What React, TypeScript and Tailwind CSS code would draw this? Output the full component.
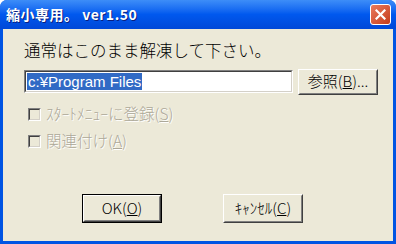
const jp = { fontFamily: '"Noto Sans CJK JP", sans-serif' };

function Check({ label, mn }: { label: string; mn: string }) {
  return (
    <div className="flex items-center h-[17px]">
      <div className="w-[13px] h-[13px] border border-t-[#808080] border-l-[#808080] border-b-white border-r-white">
        <div className="w-full h-full border border-t-[#404040] border-l-[#404040] border-b-[#D4D0C8] border-r-[#D4D0C8] bg-[#ECE9D8]"></div>
      </div>
      <span className="ml-[5px] text-[15.5px] font-light leading-none text-[#ACA899] [text-shadow:1px_1px_0_#fff]">
        {label}(<span className="underline">{mn}</span>)
      </span>
    </div>
  );
}

function Btn({ children, def, className }: { children: React.ReactNode; def?: boolean; className?: string }) {
  return (
    <div className={`${def ? "border border-black" : ""} ${className ?? ""}`}>
      <div className="h-full border border-t-white border-l-white border-b-[#404040] border-r-[#404040]">
        <div className="h-full flex items-center justify-center border border-t-[#ECE9D8] border-l-[#ECE9D8] border-b-[#808080] border-r-[#808080] text-[15px] font-light text-black">
          {children}
        </div>
      </div>
    </div>
  );
}

export default function App() {
  return (
    <div className="w-[396px] h-[244px] flex flex-col bg-[#0054E3] rounded-t-[7px] overflow-hidden" style={jp}>
      <div className="h-[29px] flex items-center justify-between pl-[6px] pr-[5px] bg-gradient-to-b from-[#3D8DF8] via-[#0058EE] to-[#0048D8]">
        <span className="text-white font-bold text-[14px] tracking-[0.5px] [text-shadow:1px_1px_0_#0A1F80]">縮小専用。 ver1.50</span>
        <div className="w-[21px] h-[21px] rounded-[3px] border border-white bg-gradient-to-br from-[#E97A5C] to-[#C53A18] flex items-center justify-center">
          <svg width="11" height="11" viewBox="0 0 11 11">
            <path d="M1.5 1.5 L9.5 9.5 M9.5 1.5 L1.5 9.5" stroke="white" strokeWidth="2.2" strokeLinecap="square" />
          </svg>
        </div>
      </div>
      <div className="flex-1 mx-[3px] mb-[3px] bg-[#ECE9D8] flex flex-col pl-[21px] pt-[13px]">
        <div className="text-[16.5px] font-light leading-none text-black">通常はこのまま解凍して下さい。</div>
        <div className="flex items-center mt-[10px] gap-[5px]">
          <div className="w-[269px] h-[23px] border border-t-[#808080] border-l-[#808080] border-b-white border-r-white">
            <div className="h-full border border-t-[#404040] border-l-[#404040] border-b-[#D4D0C8] border-r-[#D4D0C8] bg-white flex items-center pl-[1px]">
              <span className="bg-[#316AC5] text-white text-[15px] leading-[17px] px-[1px] font-['Liberation_Sans',sans-serif]">c:¥Program Files</span>
            </div>
          </div>
          <Btn className="w-[80px] h-[26px]">参照(<span className="underline">B</span>)...</Btn>
        </div>
        <div className="flex flex-col gap-[10px] mt-[11px] pl-[4px]">
          <Check label="ｽﾀｰﾄﾒﾆｭｰに登録" mn="S" />
          <Check label="関連付け" mn="A" />
        </div>
        <div className="flex mt-[44px] pl-[58px] gap-[61px]">
          <Btn def className="w-[80px] h-[29px]">OK(<span className="underline">O</span>)</Btn>
          <Btn className="w-[80px] h-[29px]">ｷｬﾝｾﾙ(<span className="underline">C</span>)</Btn>
        </div>
      </div>
    </div>
  );
}
